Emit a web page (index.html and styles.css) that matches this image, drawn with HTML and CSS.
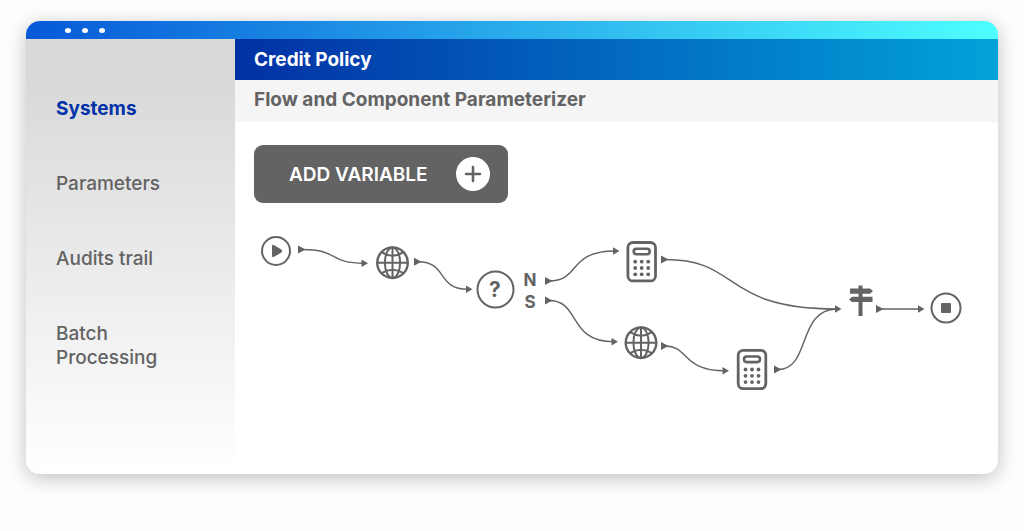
FILE: index.html
```html
<!DOCTYPE html>
<html lang="en">
<head>
    <meta charset="UTF-8">
    <title>Credit Policy</title>
    <meta name="viewport" content="width=device-width, initial-scale=1.0">
    <link rel="stylesheet" href="styles.css">
</head>
<body>

    <div class="window">
        <div class="titlebar">
            <span class="dot"></span>
            <span class="dot"></span>
            <span class="dot"></span>
        </div>

        <div class="layout">
            <nav class="sidebar">
                <a href="#" class="active">Systems</a>
                <a href="#">Parameters</a>
                <a href="#">Audits trail</a>
                <a href="#">Batch Processing</a>
            </nav>

            <main class="main">
                <h1>Credit Policy</h1>
                <h2>Flow and Component Parameterizer</h2>

                <div class="content">
                    <button type="button" class="add-button">
                        ADD VARIABLE
                        <svg class="plus" viewBox="0 0 34 34">
                            <circle cx="17" cy="17" r="17" fill="#fff"/>
                            <path d="M17 10v14M10 17h14" stroke="#636363" stroke-width="2.6" stroke-linecap="round"/>
                        </svg>
                    </button>

                    <svg class="flow" viewBox="0 0 725 180">
                        <defs>
                            <g id="globe">
                                <circle r="15.3" stroke-width="2.4"/>
                                <ellipse rx="7.6" ry="15.3"/>
                                <path d="M0-15.3v30.6M-15.3 0h30.6"/>
                                <path d="M-11-10.5Q0-3.5 11-10.5M-11 10.5Q0 3.5 11 10.5"/>
                            </g>
                            <g id="calculator">
                                <rect x="-13.8" y="-19.2" width="27.6" height="38.4" rx="5" stroke-width="2.8"/>
                                <rect x="-8" y="-13" width="16" height="5.6" rx="2.8" stroke-width="2.6"/>
                                <g class="solid">
                                    <circle cx="-6.5" cy="0" r="1.9"/>
                                    <circle cx="0" cy="0" r="1.9"/>
                                    <circle cx="6.5" cy="0" r="1.9"/>
                                    <circle cx="-6.5" cy="6.3" r="1.9"/>
                                    <circle cx="0" cy="6.3" r="1.9"/>
                                    <circle cx="6.5" cy="6.3" r="1.9"/>
                                    <circle cx="-6.5" cy="12.6" r="1.9"/>
                                    <circle cx="0" cy="12.6" r="1.9"/>
                                    <circle cx="6.5" cy="12.6" r="1.9"/>
                                </g>
                            </g>
                            <path id="out" class="solid" d="M0-4L7.5 0L0 4z"/>
                            <path id="in" class="solid" d="M-6.5-3.7L0 0L-6.5 3.7z"/>
                        </defs>

                        <!-- connectors -->
                        <g class="lines">
                            <path d="M48 22.5C86 22.5 74 36.3 110 36.3"/>
                            <path d="M164 34.7C194 34.7 182 62.3 214 62.3"/>
                            <path d="M295 54C327 54 313 24 361 24"/>
                            <path d="M295 73.5C327 73.5 313 114.7 360 114.7"/>
                            <path d="M411 32.5C488 32.5 466 82 583 82"/>
                            <path d="M411 119C435 119 428 143.7 471 143.7"/>
                            <path d="M524 142.5C557 142.5 543 82 583 82"/>
                            <path d="M626 82H666"/>
                        </g>
                        <use href="#out" x="44" y="22.5"/>
                        <use href="#in" x="114" y="36.3"/>
                        <use href="#out" x="160" y="34.7"/>
                        <use href="#in" x="218.5" y="62.3"/>
                        <use href="#out" x="291" y="54"/>
                        <use href="#in" x="365.5" y="24"/>
                        <use href="#out" x="291" y="73.5"/>
                        <use href="#in" x="364" y="114.7"/>
                        <use href="#out" x="407" y="32.5"/>
                        <use href="#out" x="407" y="119"/>
                        <use href="#in" x="475" y="143.7"/>
                        <use href="#out" x="520" y="142.5"/>
                        <use href="#in" x="587.5" y="82"/>
                        <use href="#out" x="622" y="82"/>
                        <use href="#in" x="670.5" y="82"/>

                        <!-- start -->
                        <circle cx="22" cy="24" r="14"/>
                        <path class="solid" d="M18 19.5Q18 17 20.2 18.2L27 22.3Q29.2 24 27 25.7L20.2 29.8Q18 31 18 28.5z"/>

                        <use href="#globe" x="138.5" y="35.7"/>

                        <!-- decision -->
                        <circle cx="241.5" cy="62.5" r="18"/>
                        <text class="question" x="241" y="70">?</text>
                        <text class="branch" x="276" y="59">N</text>
                        <text class="branch" x="276" y="81">S</text>

                        <use href="#calculator" x="387.7" y="34.7"/>
                        <use href="#globe" x="387" y="115.7"/>
                        <use href="#calculator" x="498" y="142.5"/>

                        <!-- signpost -->
                        <path class="solid" d="M604.5 58.5h4v3h7.5l3 2.6l-3 2.6h-7.5v3h10v5.4h-10v14h-4v-14h-6.5l-3-2.7l3-2.7h6.5v-3h-8.5v-5.2h8.5z"/>

                        <!-- end -->
                        <circle cx="692" cy="81" r="14.5"/>
                        <rect class="solid" x="687" y="76" width="10" height="10" rx="1"/>
                    </svg>
                </div>
            </main>
        </div>
    </div>

</body>
</html>
```
FILE: styles.css
```css
* {
    box-sizing: border-box;
}
body {
    font-family: Inter, "Liberation Sans", sans-serif;
    margin: 0;
    padding: 21px 26px;
    background-color: #fefefe;
    color: #636363;
}
.window {
    overflow: hidden;
    border-radius: 14px;
    background-color: #ffffff;
    box-shadow: 0 4px 20px rgba(0, 0, 0, 0.25);
}
.titlebar {
    display: flex;
    align-items: center;
    gap: 11px;
    height: 18px;
    padding-left: 39px;
    background: linear-gradient(to right, #0659d8, #4dffff);
}
.dot {
    width: 6px;
    height: 5px;
    border-radius: 50%;
    background-color: #ffffff;
}
.layout {
    display: flex;
}
.sidebar {
    display: flex;
    flex-direction: column;
    flex: none;
    gap: 51px;
    width: 209px;
    padding: 58px 60px 0 30px;
    background: linear-gradient(to bottom, #d9d9d9 10%, #ffffff);
}
.sidebar a {
    font-size: 19px;
    font-weight: 500;
    line-height: 24px;
    color: #636363;
    text-decoration: none;
}
.sidebar .active {
    font-weight: bold;
    color: #0232a8;
}
.main {
    flex: 1;
    min-width: 0;
}
h1, h2 {
    margin: 0;
    font-size: 19px;
    font-weight: bold;
}
h1 {
    padding: 0 19px;
    line-height: 41px;
    color: #ffffff;
    background: linear-gradient(to right, #0230a5, #02a2da);
}
h2 {
    padding: 8px 19px 10px;
    line-height: 24px;
    background-color: #f5f5f5;
}
.content {
    padding: 23px 19px 67px;
}
.add-button {
    display: flex;
    align-items: center;
    gap: 28px;
    height: 58px;
    padding: 0 18px 0 35px;
    border: none;
    border-radius: 9px;
    font-family: inherit;
    font-size: 19px;
    font-weight: 600;
    color: #ffffff;
    background-color: #636363;
    cursor: pointer;
}
.plus {
    width: 34px;
    height: 34px;
}

/* Flow diagram */
.flow {
    display: block;
    width: 100%;
    margin-top: 24px;
    fill: none;
    stroke: #636363;
    stroke-width: 2;
}
.lines {
    stroke-width: 1.4;
}
.solid {
    fill: #636363;
    stroke: none;
}
.flow text {
    fill: #636363;
    stroke: none;
    font-weight: bold;
    text-anchor: middle;
}
.question {
    font-size: 21px;
}
.branch {
    font-size: 17px;
}
```
